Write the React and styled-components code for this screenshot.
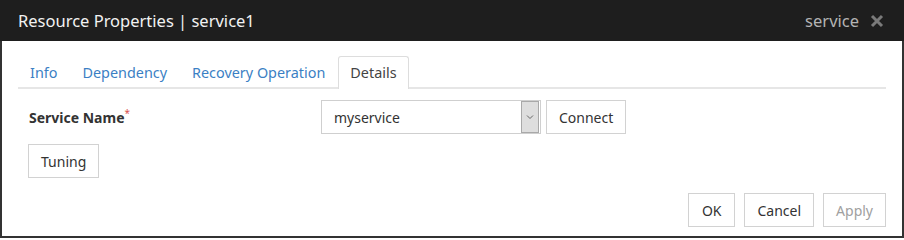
import React from "react";
import styled, { createGlobalStyle } from "styled-components";

const Global = createGlobalStyle`
  html, body {
    margin: 0;
    padding: 0;
    background: #ffffff;
  }
  body {
    font-family: "Noto Sans", "Open Sans", "Liberation Sans", sans-serif;
  }
`;

const Frame = styled.div`
  width: 904px;
  height: 238px;
  box-sizing: border-box;
  border: 2px solid #333333;
  border-top: none;
  display: flex;
  flex-direction: column;
  background: #ffffff;
`;

const TitleBar = styled.div`
  height: 42px;
  margin: 0 -2px;
  padding: 0 20px 0 18px;
  background: #1e1e1e;
  display: flex;
  align-items: center;
  justify-content: space-between;
`;

const Title = styled.span`
  color: #f2f2f2;
  font-size: 16.5px;
`;

const TitleRight = styled.div`
  display: flex;
  align-items: center;
  gap: 11px;
  color: #b4b4b4;
  font-size: 16.5px;
`;

const Body = styled.div`
  flex: 1;
  display: flex;
  flex-direction: column;
  padding: 15px 16px 9px 16px;
`;

const Tabs = styled.div`
  display: flex;
  gap: 1px;
  border-bottom: 2px solid #e6e6e6;
  height: 31px;
`;

const Tab = styled.div`
  padding: 0 11px;
  font-size: 14.4px;
  display: flex;
  align-items: center;
  box-sizing: border-box;
  height: ${(p) => (p.$active ? "33px" : "31px")};
  color: ${(p) => (p.$active ? "#444444" : "#3b7fc4")};
  background: #ffffff;
  border: 1px solid ${(p) => (p.$active ? "#dddddd" : "transparent")};
  border-bottom: none;
  border-radius: 3px 3px 0 0;
  padding-bottom: ${(p) => (p.$active ? "2px" : "0")};
`;

const Row = styled.div`
  display: flex;
  align-items: center;
  margin-top: 11px;
  padding-left: 11px;
`;

const Label = styled.div`
  width: 292px;
  font-size: 14px;
  font-weight: bold;
  color: #333333;
`;

const Req = styled.sup`
  color: #d9534f;
  font-size: 10px;
  font-weight: normal;
  vertical-align: top;
  line-height: 1;
`;

const Select = styled.div`
  width: 220px;
  height: 34px;
  box-sizing: border-box;
  border: 1px solid #cfcfcf;
  display: flex;
  align-items: stretch;
`;

const SelectValue = styled.div`
  flex: 1;
  display: flex;
  align-items: center;
  padding-left: 12px;
  font-size: 14px;
  color: #333333;
`;

const Arrow = styled.div`
  width: 16px;
  background: #dedede;
  border: 1px solid #a9a9a9;
  margin: 0 1px 0 0;
  display: flex;
  align-items: center;
  justify-content: center;
`;

const Button = styled.button`
  height: 34px;
  padding: 0 ${(p) => p.$pad || 12}px;
  background: #ffffff;
  border: 1px solid #d2d2d2;
  font-family: inherit;
  font-size: 14px;
  color: ${(p) => (p.disabled ? "#a0a0a0" : "#333333")};
  margin-left: ${(p) => p.$ml || 0}px;
`;

const Footer = styled.div`
  margin-top: 15px;
  display: flex;
  justify-content: flex-end;
  gap: 9px;
`;

const TuningRow = styled.div`
  margin-top: 10px;
  padding-left: 10px;
`;

export default function App() {
  return (
    <>
      <Global />
      <Frame>
        <TitleBar>
          <Title>Resource Properties | service1</Title>
          <TitleRight>
            service
            <svg width="14" height="14" viewBox="0 0 14 14">
              <path d="M2 2 L12 12 M12 2 L2 12" stroke="#7a7a7a" strokeWidth="3" />
            </svg>
          </TitleRight>
        </TitleBar>
        <Body>
          <Tabs>
            <Tab>Info</Tab>
            <Tab>Dependency</Tab>
            <Tab>Recovery Operation</Tab>
            <Tab $active>Details</Tab>
          </Tabs>
          <Row>
            <Label>
              Service Name<Req>*</Req>
            </Label>
            <Select>
              <SelectValue>myservice</SelectValue>
              <Arrow>
                <svg width="8" height="6" viewBox="0 0 8 6">
                  <path d="M1 1.5 L4 4.5 L7 1.5" fill="none" stroke="#666" strokeWidth="1" />
                </svg>
              </Arrow>
            </Select>
            <Button $ml={5}>Connect</Button>
          </Row>
          <TuningRow>
            <Button>Tuning</Button>
          </TuningRow>
          <Footer>
            <Button $pad={13}>OK</Button>
            <Button>Cancel</Button>
            <Button disabled>Apply</Button>
          </Footer>
        </Body>
      </Frame>
    </>
  );
}
